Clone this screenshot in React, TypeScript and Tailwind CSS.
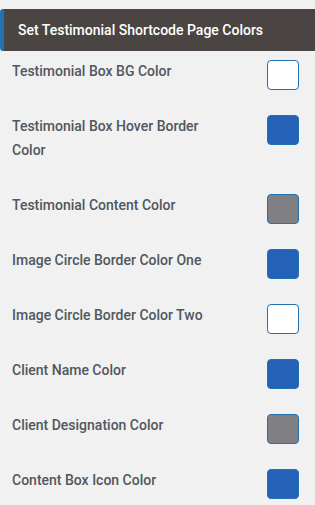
import React from "react";

const rows: { label: string; color: string }[] = [
  { label: "Testimonial Box BG Color", color: "#ffffff" },
  { label: "Testimonial Box Hover Border Color", color: "#2462b7" },
  { label: "Testimonial Content Color", color: "#808084" },
  { label: "Image Circle Border Color One", color: "#2462b7" },
  { label: "Image Circle Border Color Two", color: "#ffffff" },
  { label: "Client Name Color", color: "#2462b7" },
  { label: "Client Designation Color", color: "#808084" },
  { label: "Content Box Icon Color", color: "#2462b7" },
];

export default function App() {
  return (
    <div
      className="w-[315px] h-[505px] bg-[#f1f1f1] overflow-hidden pt-[9px]"
      style={{ fontFamily: "Roboto, 'Liberation Sans', sans-serif" }}
    >
      <div className="h-[42px] bg-[#4a4543] border-l-4 border-[#2271b1] rounded-l-[3px] flex items-center pl-[14px]">
        <span className="text-white text-[14px] font-medium">
          Set Testimonial Shortcode Page Colors
        </span>
      </div>
      <div className="pt-[8px] pl-[12px] pr-[16px]">
        {rows.map((r) => (
          <div key={r.label} className="flex items-start justify-between">
            <div className="w-[200px] text-[14px] leading-[24px] font-medium text-[#50575e] pb-[31px]">
              {r.label}
            </div>
            <div
              className="mt-[1px] w-[32px] h-[30px] rounded-[4px] border border-[#2271b1]"
              style={{ backgroundColor: r.color }}
            />
          </div>
        ))}
      </div>
    </div>
  );
}
